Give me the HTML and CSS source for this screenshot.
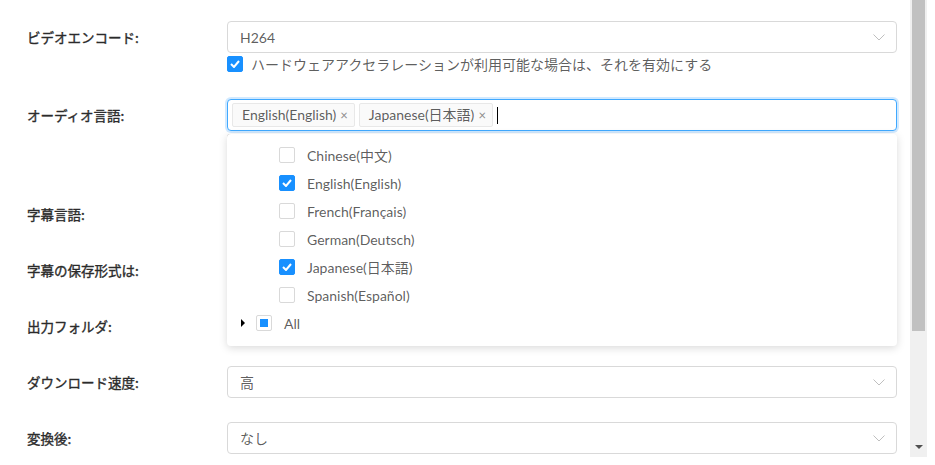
FILE: index.html
```html
<!DOCTYPE html>
<html lang="ja">
 <head>
  <meta charset="utf-8"/>
  <title>設定</title>
  <link rel="stylesheet" href="styles.css">
 </head>
 <body>
  <div class="page">
   <div class="content">
    <div class="row">
     <div class="label">ビデオエンコード:</div>
     <div class="control">
      <div class="select">
       <span class="value">H264</span>
       <svg class="arrow" width="12" height="7" viewBox="0 0 12 7"><polyline points="0.5,0.5 6,6 11.5,0.5" fill="none" stroke="#bfbfbf" stroke-width="1"/></svg>
      </div>
      <label class="check">
       <span class="box checked"><svg width="10" height="8" viewBox="0 0 10 8"><polyline points="1,4 4,7 9,1" fill="none" stroke="#fff" stroke-width="2"/></svg></span>
       ハードウェアアクセラレーションが利用可能な場合は、それを有効にする
      </label>
     </div>
    </div>

    <div class="row tall">
     <div class="label">オーディオ言語:</div>
     <div class="control">
      <div class="select multi focused">
       <span class="tag">English(English)<span class="close">×</span></span>
       <span class="tag">Japanese(日本語)<span class="close">×</span></span>
       <span class="caret"></span>
      </div>
      <span class="box hidden-box"></span>
      <div class="dropdown">
       <div class="node child"><span class="box"></span>Chinese(中文)</div>
       <div class="node child"><span class="box checked"><svg width="10" height="8" viewBox="0 0 10 8"><polyline points="1,4 4,7 9,1" fill="none" stroke="#fff" stroke-width="2"/></svg></span>English(English)</div>
       <div class="node child"><span class="box"></span>French(Français)</div>
       <div class="node child"><span class="box"></span>German(Deutsch)</div>
       <div class="node child"><span class="box checked"><svg width="10" height="8" viewBox="0 0 10 8"><polyline points="1,4 4,7 9,1" fill="none" stroke="#fff" stroke-width="2"/></svg></span>Japanese(日本語)</div>
       <div class="node child"><span class="box"></span>Spanish(Español)</div>
       <div class="node parent"><span class="switcher"></span><span class="box partial"><span class="inner"></span></span>All</div>
      </div>
     </div>
    </div>

    <div class="row">
     <div class="label">字幕言語:</div>
     <div class="control"><div class="select"></div></div>
    </div>

    <div class="row">
     <div class="label">字幕の保存形式は:</div>
     <div class="control"><div class="select"></div></div>
    </div>

    <div class="row">
     <div class="label">出力フォルダ:</div>
     <div class="control"><div class="select"></div></div>
    </div>

    <div class="row">
     <div class="label">ダウンロード速度:</div>
     <div class="control">
      <div class="select">
       <span class="value">高</span>
       <svg class="arrow" width="12" height="7" viewBox="0 0 12 7"><polyline points="0.5,0.5 6,6 11.5,0.5" fill="none" stroke="#bfbfbf" stroke-width="1"/></svg>
      </div>
     </div>
    </div>

    <div class="row">
     <div class="label">変換後:</div>
     <div class="control">
      <div class="select">
       <span class="value">なし</span>
       <svg class="arrow" width="12" height="7" viewBox="0 0 12 7"><polyline points="0.5,0.5 6,6 11.5,0.5" fill="none" stroke="#bfbfbf" stroke-width="1"/></svg>
      </div>
     </div>
    </div>
   </div>

   <div class="scrollbar">
    <div class="thumb"></div>
    <div class="down"></div>
   </div>
  </div>
 </body>
</html>
```

FILE: styles.css
```css
    html, body {
	margin: 0px;
	padding: 0px;
	background-color: #ffffff;
	overflow: hidden;
    }

    body {
	font-family: "Lato", "Noto Sans CJK JP", sans-serif;
	font-size: 14px;
	color: rgba(0, 0, 0, 0.65);
    }

    div.page {
	display: flex;
	height: 457px;
    }

    div.content {
	width: 883px;
	padding-left: 27px;
	padding-top: 21px;
    }

    div.row {
	display: flex;
	margin-bottom: 24px;
    }

    div.row.tall {
	margin-bottom: 45px;
    }

    div.label {
	width: 200px;
	height: 32px;
	line-height: 32px;
	color: #2b2b2b;
	font-weight: 400;
	font-family: "Noto Sans CJK JP", sans-serif;
	font-size: 13.5px;
	-webkit-text-stroke: 0.35px #2b2b2b;
    }

    div.control {
	width: 670px;
	position: relative;
    }

    div.select {
	box-sizing: border-box;
	height: 32px;
	border: 1px solid #d9d9d9;
	border-radius: 4px;
	display: flex;
	align-items: center;
	padding-left: 12px;
	padding-right: 11px;
	background-color: #ffffff;
    }

    div.select span.value {
	flex: 1;
	color: rgba(0, 0, 0, 0.65);
    }

    div.select svg.arrow {
	margin-left: auto;
    }

    div.select.multi {
	padding-left: 4px;
	gap: 4px;
    }

    div.select.focused {
	border-color: #40a9ff;
	box-shadow: 0 0 0 2px rgba(24, 144, 255, 0.2);
    }

    span.tag {
	box-sizing: border-box;
	height: 24px;
	line-height: 22px;
	padding: 0 6px 0 9px;
	background-color: #fafafa;
	border: 1px solid #e8e8e8;
	border-radius: 2px;
	color: rgba(0, 0, 0, 0.65);
	white-space: nowrap;
    }

    span.tag span.close {
	margin-left: 4px;
	color: #8c8c8c;
	font-size: 13px;
    }

    span.caret {
	width: 1px;
	height: 17px;
	background-color: #000000;
	margin-left: 0px;
    }

    label.check {
	display: flex;
	align-items: center;
	height: 22px;
	gap: 8px;
	font-family: "Noto Sans CJK JP", sans-serif;
	font-size: 14px;
	color: rgba(0, 0, 0, 0.65);
    }

    span.box {
	box-sizing: border-box;
	width: 16px;
	height: 16px;
	border: 1px solid #d9d9d9;
	border-radius: 2px;
	background-color: #ffffff;
	display: inline-flex;
	align-items: center;
	justify-content: center;
	flex-shrink: 0;
    }

    span.box.checked {
	background-color: #1890ff;
	border-color: #1890ff;
    }

    span.box.partial span.inner {
	width: 8px;
	height: 8px;
	background-color: #1890ff;
    }

    span.hidden-box {
	margin-top: 3px;
    }

    div.dropdown {
	position: absolute;
	top: 35px;
	left: 0px;
	width: 670px;
	box-sizing: border-box;
	padding: 7px 0 9px 0;
	background-color: #ffffff;
	border-radius: 4px;
	box-shadow: 0 2px 8px rgba(0, 0, 0, 0.15);
	z-index: 10;
    }

    div.node {
	height: 28px;
	display: flex;
	align-items: center;
	color: rgba(0, 0, 0, 0.65);
    }

    div.node.child {
	padding-left: 52px;
	gap: 12px;
    }

    div.node.parent {
	padding-left: 14px;
    }

    span.switcher {
	width: 0;
	height: 0;
	border-top: 4px solid transparent;
	border-bottom: 4px solid transparent;
	border-left: 4px solid #000000;
	margin-right: 11px;
    }

    div.node.parent span.box {
	margin-right: 12px;
    }

    div.scrollbar {
	width: 17px;
	background-color: #f0f0f0;
	display: flex;
	flex-direction: column;
	align-items: center;
    }

    div.thumb {
	width: 13px;
	height: 331px;
	background-color: #c1c1c1;
    }

    div.down {
	margin-top: auto;
	margin-bottom: 8px;
	width: 0;
	height: 0;
	border-left: 4px solid transparent;
	border-right: 4px solid transparent;
	border-top: 4px solid #505050;
    }
```
